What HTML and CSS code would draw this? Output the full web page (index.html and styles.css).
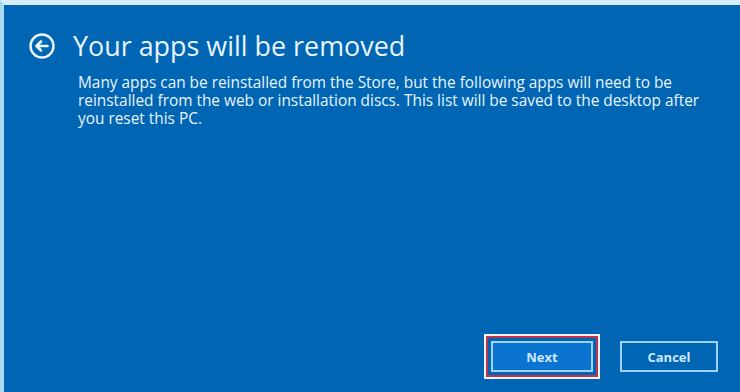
FILE: index.html
```html
<!DOCTYPE html>
<html>
<head>
<meta charset="utf-8">
<link rel="stylesheet" href="styles.css">
</head>
<body>
<div class="screen">
  <div class="header">
    <svg class="back" width="26" height="26" viewBox="0 0 26 26">
      <circle cx="13" cy="13" r="11.5" fill="none" stroke="#eaf5ff" stroke-width="2.4"/>
      <path d="M7.5 13 H18.5 M12 8.5 L7.5 13 L12 17.5" fill="none" stroke="#eaf5ff" stroke-width="2.6" stroke-linecap="round" stroke-linejoin="round"/>
    </svg>
    <h1 class="title">Your apps will be removed</h1>
  </div>
  <p class="desc">Many apps can be reinstalled from the Store, but the following apps will need to be reinstalled from the web or installation discs. This list will be saved to the desktop after you reset this PC.</p>
  <div class="spacer"></div>
  <div class="actions">
    <div class="focus-ring"><button class="btn primary">Next</button></div>
    <button class="btn">Cancel</button>
  </div>
</div>
</body>
</html>
```
FILE: styles.css
```css
html, body {
  margin: 0;
  padding: 0;
  background: #0066b4;
}
.screen {
  width: 736px;
  height: 387px;
  border-top: 5px solid #d6eefb;
  border-left: 4px solid #a9d9f5;
  background: #0066b4;
  display: flex;
  flex-direction: column;
  font-family: "Open Sans", "Noto Sans", sans-serif;
  color: #e8f4ff;
}
.header {
  display: flex;
  align-items: center;
  gap: 18px;
  padding: 26px 0 0 25px;
}
.back { flex: none; }
.title {
  margin: 0;
  font-weight: 400;
  font-size: 26.9px;
  line-height: 30px;
}
.desc {
  margin: 13px 0 0 74px;
  width: 630px;
  font-size: 15.4px;
  line-height: 18px;
}
.spacer { flex: 1; }
.actions {
  display: flex;
  align-items: center;
  justify-content: flex-end;
  gap: 20px;
  padding: 0 22px 13px 0;
}
.focus-ring {
  border: 2px solid #f4f4f8;
  outline: 2px solid #c0344a;
  outline-offset: -4px;
  padding: 5px;
}
.btn {
  font-family: "Open Sans", "Noto Sans", sans-serif;
  font-weight: 700;
  font-size: 13px;
  color: #cfe8ff;
  background: #0066b4;
  border: 2px solid #9ed4fa;
  height: 31px;
  width: 98px;
  padding: 0;
}
.btn.primary {
  background: #0a74d0;
  width: 102px;
}
```
